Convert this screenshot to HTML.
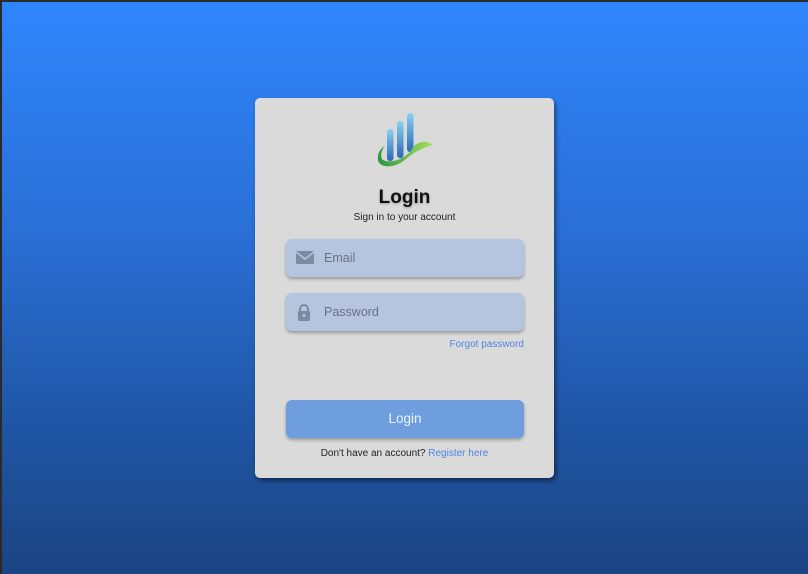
<!DOCTYPE html>
<html><head><meta charset="utf-8"><style>
*{margin:0;padding:0;box-sizing:border-box}
html,body{width:808px;height:574px;overflow:hidden}
body{font-family:"Liberation Sans",sans-serif;background:linear-gradient(180deg,#2f86fd 0%,#2a6fd6 40%,#1f55a3 75%,#1b4482 100%);position:relative}
.edge{position:absolute;left:0;top:0;width:808px;height:574px;border-top:2px solid #2a2a2a;border-left:2px solid #2a2a2a}
.card{position:absolute;left:255px;top:98px;width:299px;height:380px;background:#dadada;border-radius:5px;box-shadow:2px 3px 5px rgba(0,0,0,.45)}
.logo{position:absolute;left:121px;top:13px}
h1{position:absolute;top:89px;width:100%;text-align:center;font-size:19px;font-weight:bold;color:#111;text-shadow:0 1px 2px rgba(0,0,0,.3)}
.sub{position:absolute;top:114px;width:100%;text-align:center;font-size:10px;color:#222}
.inp{position:absolute;left:31px;width:238px;height:38px;background:#b5c5e0;border-radius:6px;box-shadow:0 2px 3px rgba(0,0,0,.3);font-size:12.5px;color:#6a7280}
.inp span{position:absolute;left:38px;top:12px}
.inp svg{position:absolute;left:10px;top:11px}
.forgot{position:absolute;right:30px;top:241px;font-size:10px;color:#4d86e0}
.btn{position:absolute;left:31px;top:302px;width:238px;height:38px;background:#6f9edf;border-radius:6px;box-shadow:0 2px 3px rgba(0,0,0,.3);color:#eef3fb;font-size:13.5px;text-align:center;line-height:38px}
.reg{position:absolute;top:350px;width:100%;text-align:center;font-size:10px;color:#222}
.reg a{color:#4d86e0;text-decoration:none}
</style></head><body>
<div class="edge"></div>
<div class="card">
<svg class="logo" width="58" height="58" viewBox="0 0 58 58">
<defs><linearGradient id="b" x1="0" y1="0" x2="0" y2="1"><stop offset="0" stop-color="#8ad0f2"/><stop offset="1" stop-color="#2a68b8"/></linearGradient>
<linearGradient id="g" x1="0" y1="0" x2="1" y2="0"><stop offset="0" stop-color="#2c9440"/><stop offset="1" stop-color="#a8e060"/></linearGradient></defs>
<rect x="11" y="18" width="6.5" height="32" rx="3" fill="url(#b)"/>
<rect x="21" y="10" width="6.5" height="37" rx="3" fill="url(#b)"/>
<rect x="31" y="2" width="6.5" height="39" rx="3" fill="url(#b)"/>
<path d="M2 46 C0 56,16 60,30 48 C38 41,48 36,57 34 C50 28,40 31,36 38 C30 48,12 54,6 48 C4 44,6 38,9 35 C4 38,2 42,2 46Z" fill="url(#g)"/>
</svg>
<h1>Login</h1>
<div class="sub">Sign in to your account</div>
<div class="inp" style="top:141px"><svg width="18" height="15" viewBox="0 0 18 15"><rect x="0" y="1" width="18" height="13" rx="1.5" fill="#7e8aa0"/><path d="M0 2 L9 9 L18 2" stroke="#b5c5e0" stroke-width="1.5" fill="none"/></svg><span>Email</span></div>
<div class="inp" style="top:195px"><svg width="16" height="17" viewBox="0 0 16 17"><path d="M4 8 V5 a4 4 0 0 1 8 0 V8" stroke="#7e8aa0" stroke-width="2" fill="none"/><rect x="2" y="7" width="12" height="10" rx="1.5" fill="#7e8aa0"/><circle cx="8" cy="11.5" r="1.5" fill="#b5c5e0"/></svg><span>Password</span></div>
<div class="forgot">Forgot password</div>
<div class="btn">Login</div>
<div class="reg">Don't have an account? <a>Register here</a></div>
</div>
</body></html>
